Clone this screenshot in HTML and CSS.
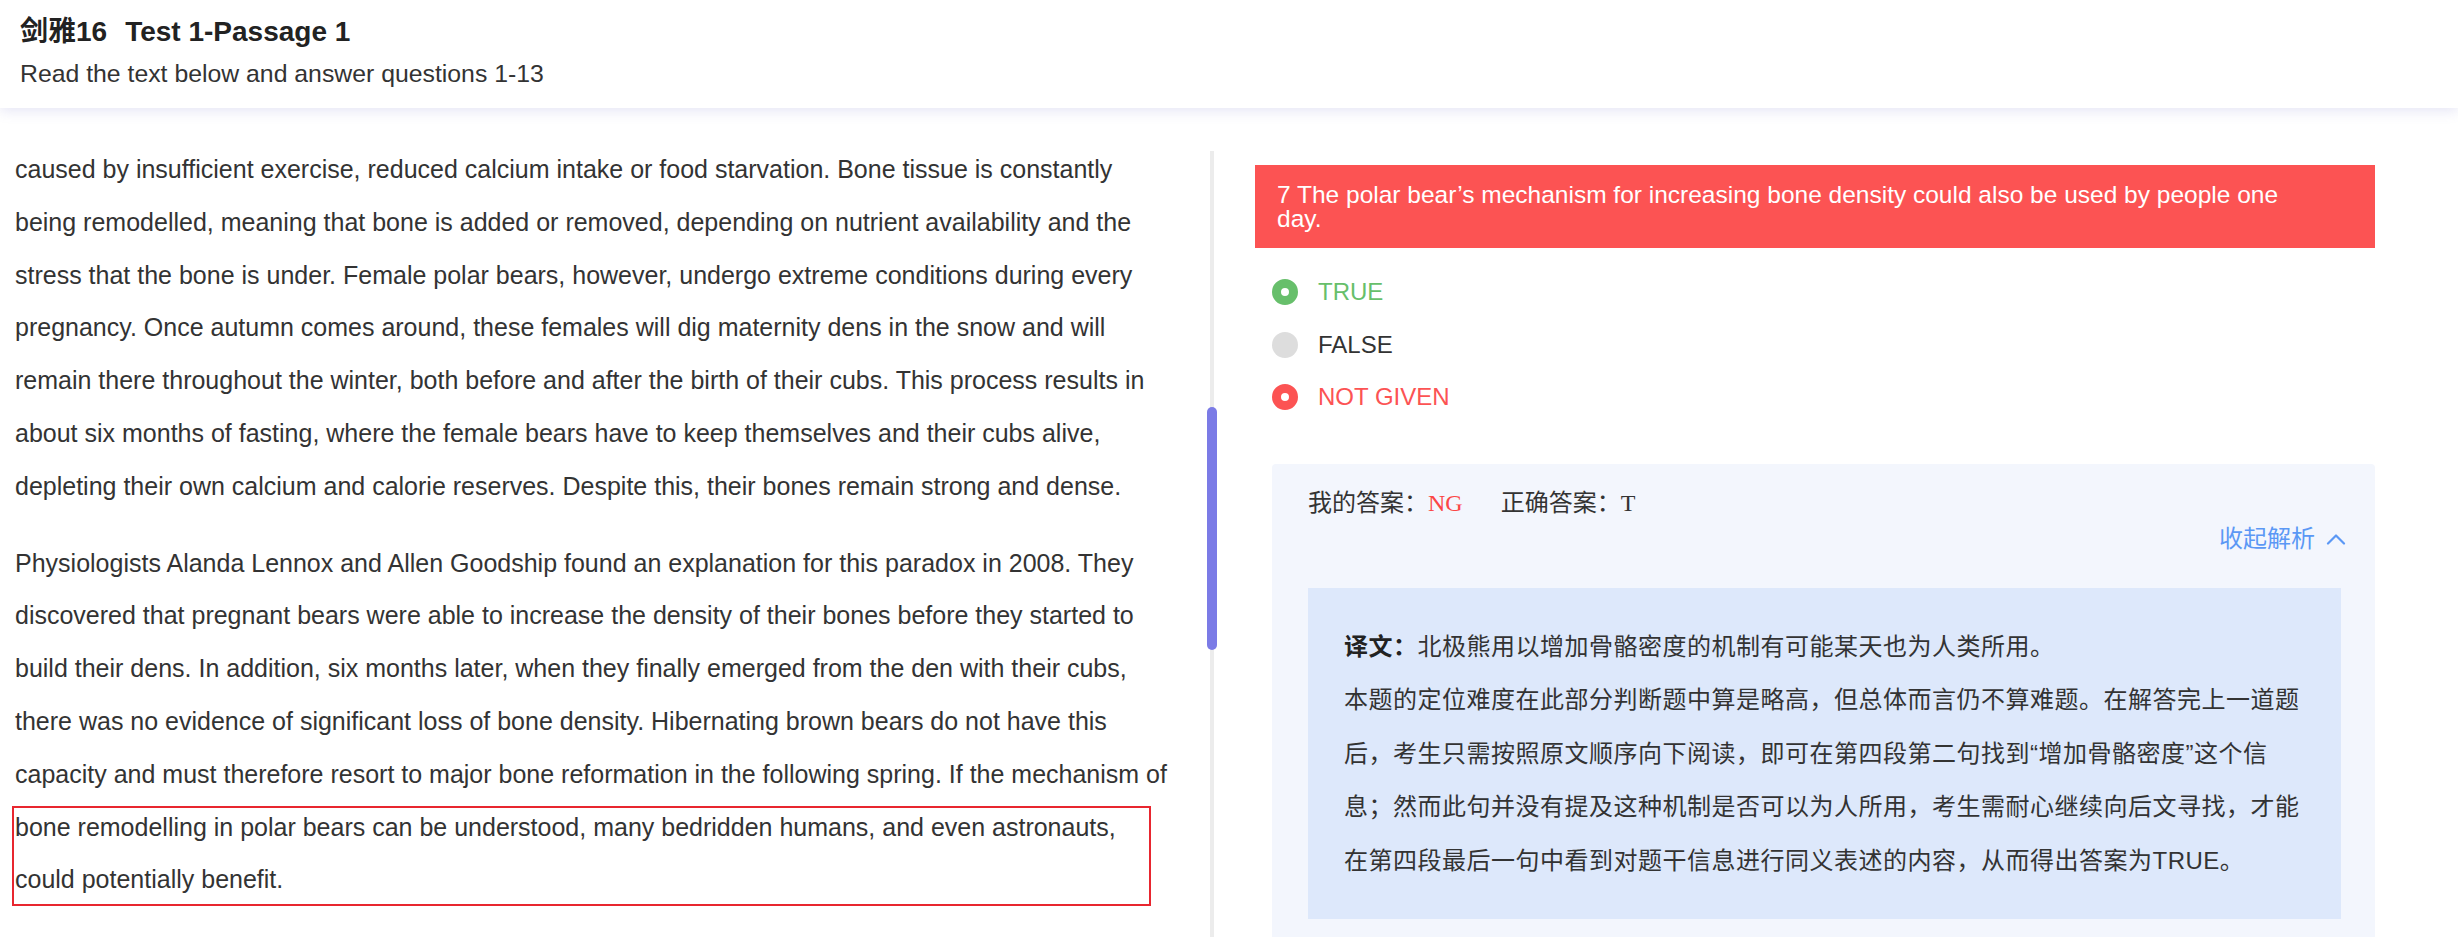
FILE: index.html
```html
<!DOCTYPE html>
<html lang="zh-CN">
<head>
<meta charset="utf-8">
<title>剑雅16 Test 1-Passage 1</title>
<link rel="stylesheet" href="styles.css">
</head>
<body>
<div class="page">
  <header class="top">
    <h1 class="title"><span>剑雅16</span><span class="title-test">Test 1-Passage 1</span></h1>
    <p class="subtitle">Read the text below and answer questions 1-13</p>
  </header>
  <main class="main">
    <section class="reader">
      <div class="passage">
        <p>caused by insufficient exercise, reduced calcium intake or food starvation. Bone tissue is constantly being remodelled, meaning that bone is added or removed, depending on nutrient availability and the stress that the bone is under. Female polar bears, however, undergo extreme conditions during every pregnancy. Once autumn comes around, these females will dig maternity dens in the snow and will remain there throughout the winter, both before and after the birth of their cubs. This process results in about six months of fasting, where the female bears have to keep themselves and their cubs alive, depleting their own calcium and calorie reserves. Despite this, their bones remain strong and dense.</p>
        <p class="marked">Physiologists Alanda Lennox and Allen Goodship found an explanation for this paradox in 2008. They discovered that pregnant bears were able to increase the density of their bones before they started to build their dens. In addition, six months later, when they finally emerged from the den with their cubs, there was no evidence of significant loss of bone density. Hibernating brown bears do not have this capacity and must therefore resort to major bone reformation in the following spring. If the mechanism of bone remodelling in polar bears can be understood, many bedridden humans, and even astronauts, could potentially benefit.<span class="mark"></span></p>
      </div>
      <div class="scrollbar">
        <div class="track"></div>
        <div class="thumb"></div>
      </div>
    </section>
    <section class="question">
      <div class="q-title">7 The polar bear’s mechanism for increasing bone density could also be used by people one day.</div>
      <ul class="options">
        <li class="opt opt-true"><span class="dot"></span>TRUE</li>
        <li class="opt opt-false"><span class="dot"></span>FALSE</li>
        <li class="opt opt-ng"><span class="dot"></span>NOT GIVEN</li>
      </ul>
      <div class="analysis">
        <div class="answers">我的答案：<span class="mine">NG</span><span class="right-ans">正确答案：T</span></div>
        <div class="toggle">
          <span>收起解析</span>
          <svg viewBox="0 0 20 12" aria-hidden="true"><polyline points="2,10.5 10,2.5 18,10.5" fill="none" stroke="currentColor" stroke-width="2.2" stroke-linecap="round" stroke-linejoin="round"/></svg>
        </div>
        <div class="explain">
          <p><b>译文：</b>北极熊用以增加骨骼密度的机制有可能某天也为人类所用。</p>
          <p>本题的定位难度在此部分判断题中算是略高，但总体而言仍不算难题。在解答完上一道题后，考生只需按照原文顺序向下阅读，即可在第四段第二句找到“增加骨骼密度”这个信息；然而此句并没有提及这种机制是否可以为人所用，考生需耐心继续向后文寻找，才能在第四段最后一句中看到对题干信息进行同义表述的内容，从而得出答案为TRUE。</p>
        </div>
      </div>
    </section>
  </main>
</div>
</body>
</html>
```

FILE: styles.css
```css
* {
  box-sizing: border-box;
  margin: 0;
  padding: 0;
}

html,
body {
  height: 100%;
}

body {
  font-family: "Liberation Sans", Arial, "Noto Sans CJK SC", sans-serif;
  color: #333;
  background: #fff;
  overflow: hidden;
}

.page {
  height: 100vh;
  display: flex;
  flex-direction: column;
}

.top {
  flex: 0 0 108px;
  padding: 14px 20px 0;
  background: #fff;
  box-shadow: 0 3px 12px rgba(110, 110, 200, 0.18);
  position: relative;
  z-index: 1;
}

.title {
  font-size: 28px;
  line-height: 36px;
  font-weight: 700;
  color: #222;
}

.title-test {
  margin-left: 18px;
}

.subtitle {
  margin-top: 6px;
  font-size: 24.8px;
  line-height: 36px;
  color: #333;
}

.main {
  flex: 1;
  display: flex;
  min-height: 0;
  overflow: hidden;
}

/* left reading pane */
.reader {
  flex: 0 0 1217px;
  display: flex;
}

.passage {
  flex: 1;
  padding: 35px 35px 0 15px;
  font-size: 25px;
  line-height: 52.8px;
  color: #333;
}

.passage p + p {
  margin-top: 24px;
}

.marked {
  position: relative;
}

.mark {
  position: absolute;
  left: -3px;
  top: 269px;
  width: 1139px;
  height: 100px;
  border: 2px solid #e8262f;
  pointer-events: none;
}

.scrollbar {
  flex: 0 0 10px;
  position: relative;
  margin-top: 43px;
  display: flex;
  justify-content: center;
}

.track {
  width: 4px;
  height: 100%;
  background: #ececec;
}

.thumb {
  position: absolute;
  left: 0;
  top: 256px;
  width: 10px;
  height: 243px;
  border-radius: 5px;
  background: #7b7be6;
}

/* right question pane */
.question {
  flex: 1;
  padding: 57px 83px 0 38px;
}

.q-title {
  background: #fc5353;
  color: #fff;
  font-size: 24.5px;
  line-height: 24px;
  padding: 18px 80px 17px 22px;
}

.options {
  list-style: none;
  margin-top: 18px;
  padding-left: 17px;
}

.opt {
  display: flex;
  align-items: center;
  height: 52.5px;
  font-size: 24px;
  color: #333;
}

.dot {
  width: 26px;
  height: 26px;
  border-radius: 50%;
  margin-right: 20px;
  background: #ddd;
}

.opt-true {
  color: #67bf6b;
}

.opt-true .dot {
  border: 9px solid #67bf6b;
  background: #fff;
}

.opt-ng {
  color: #fc5353;
}

.opt-ng .dot {
  border: 9px solid #fc5353;
  background: #fff;
}

.analysis {
  margin: 40px 0 0 17px;
  background: #f3f6fd;
  border-radius: 4px;
  padding: 21px 34px 36px 36px;
}

.answers {
  font-family: "Liberation Serif", "Times New Roman", "Noto Sans CJK SC", serif;
  font-size: 24px;
  line-height: 36px;
  color: #333;
}

.mine {
  color: #fb4646;
}

.right-ans {
  margin-left: 38px;
}

.toggle {
  display: flex;
  justify-content: flex-end;
  align-items: center;
  gap: 11px;
  margin-right: -5px;
  color: #5b98f5;
  font-size: 24px;
  line-height: 36px;
}

.toggle svg {
  width: 20px;
  height: 12px;
}

.explain {
  margin-top: 31px;
  background: #dde8fb;
  padding: 32px 33px 32px 36px;
  font-size: 24px;
  letter-spacing: 0.5px;
  line-height: 53.5px;
  color: #333;
}

.explain b {
  font-weight: 700;
  color: #222;
}
```
